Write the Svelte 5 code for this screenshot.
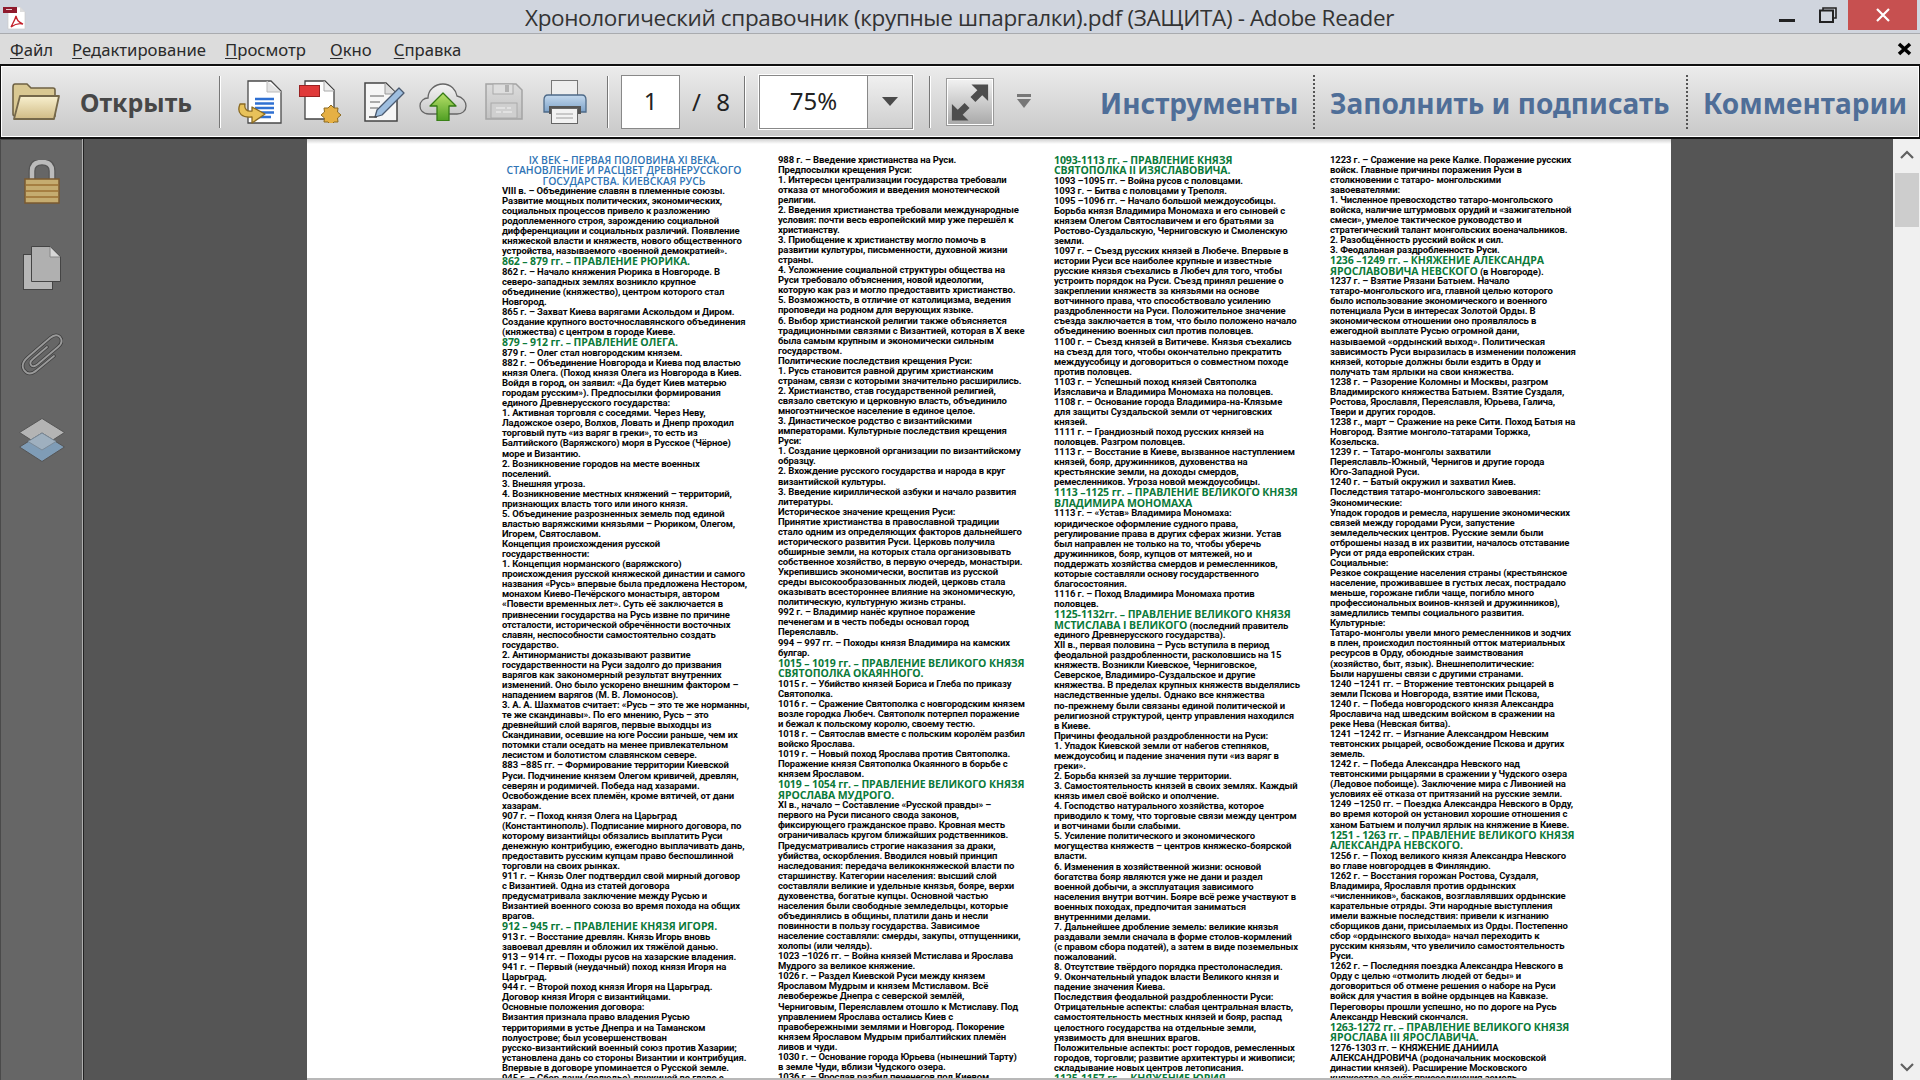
<script>
  const raw = [
`^IX ВЕК – ПЕРВАЯ ПОЛОВИНА XI ВЕКА.
^СТАНОВЛЕНИЕ И РАСЦВЕТ ДРЕВНЕРУССКОГО
^ГОСУДАРСТВА. КИЕВСКАЯ РУСЬ
VIII в. – Объединение славян в племенные союзы.
Развитие мощных политических, экономических,
социальных процессов привело к разложению
родоплеменного строя, зарождению социальной
дифференциации и социальных различий. Появление
княжеской власти и княжеств, нового общественного
устройства, называемого «военной демократией».
#862 – 879 гг. – ПРАВЛЕНИЕ РЮРИКА.
862 г. – Начало княжения Рюрика в Новгороде. В
северо-западных землях возникло крупное
объединение (княжество), центром которого стал
Новгород.
865 г. – Захват Киева варягами Аскольдом и Диром.
Создание крупного восточнославянского объединения
(княжества) с центром в городе Киеве.
#879 – 912 гг. – ПРАВЛЕНИЕ ОЛЕГА.
879 г. – Олег стал новгородским князем.
882 г. – Объединение Новгорода и Киева под властью
князя Олега. (Поход князя Олега из Новгорода в Киев.
Войдя в город, он заявил: «Да будет Киев матерью
городам русским»). Предпосылки формирования
единого Древнерусского государства:
1. Активная торговля с соседями. Через Неву,
Ладожское озеро, Волхов, Ловать и Днепр проходил
торговый путь «из варяг в греки», то есть из
Балтийского (Варяжского) моря в Русское (Чёрное)
море и Византию.
2. Возникновение городов на месте военных
поселений.
3. Внешняя угроза.
4. Возникновение местных княжений – территорий,
признающих власть того или иного князя.
5. Объединение разрозненных земель под единой
властью варяжскими князьями – Рюриком, Олегом,
Игорем, Святославом.
Концепция происхождения русской
государственности:
1. Концепция норманского (варяжского)
происхождения русской княжеской династии и самого
названия «Русь» впервые была предложена Нестором,
монахом Киево-Печёрского монастыря, автором
«Повести временных лет». Суть её заключается в
привнесении государства на Русь извне по причине
отсталости, исторической обречённости восточных
славян, неспособности самостоятельно создать
государство.
2. Антинорманисты доказывают развитие
государственности на Руси задолго до призвания
варягов как закономерный результат внутренних
изменений. Оно было ускорено внешним фактором –
нападением варягов (М. В. Ломоносов).
3. А. А. Шахматов считает: «Русь – это те же норманны,
те же скандинавы». По его мнению, Русь – это
древнейший слой варягов, первые выходцы из
Скандинавии, осевшие на юге России раньше, чем их
потомки стали оседать на менее привлекательном
лесистом и болотистом славянском севере.
883 –885 гг. – Формирование территории Киевской
Руси. Подчинение князем Олегом кривичей, древлян,
северян и родимичей. Победа над хазарами.
Освобождение всех племён, кроме вятичей, от дани
хазарам.
907 г. – Поход князя Олега на Царьград
(Константинополь). Подписание мирного договора, по
которому византийцы обязались выплатить Руси
денежную контрибуцию, ежегодно выплачивать дань,
предоставить русским купцам право беспошлинной
торговли на своих рынках.
911 г. – Князь Олег подтвердил свой мирный договор
с Византией. Одна из статей договора
предусматривала заключение между Русью и
Византией военного союза во время похода на общих
врагов.
#912 – 945 гг. – ПРАВЛЕНИЕ КНЯЗЯ ИГОРЯ.
913 г. – Восстание древлян. Князь Игорь вновь
завоевал древлян и обложил их тяжёлой данью.
913 – 914 гг. – Походы русов на хазарские владения.
941 г. – Первый (неудачный) поход князя Игоря на
Царьград.
944 г. – Второй поход князя Игоря на Царьград.
Договор князя Игоря с византийцами.
Основные положения договора:
Византия признала право владения Русью
территориями в устье Днепра и на Таманском
полуострове; был усовершенствован
русско-византийский военный союз против Хазарии;
установлена дань со стороны Византии и контрибуция.
Впервые в договоре упоминается о Русской земле.
945 г. – Сбор дани (полюдье) дружиной во главе с`,
`988 г. – Введение христианства на Руси.
Предпосылки крещения Руси:
1. Интересы централизации государства требовали
отказа от многобожия и введения монотеической
религии.
2. Введения христианства требовали международные
условия: почти весь европейский мир уже перешёл к
христианству.
3. Приобщение к христианству могло помочь в
развитии культуры, письменности, духовной жизни
страны.
4. Усложнение социальной структуры общества на
Руси требовало объяснения, новой идеологии,
которую как раз и могло предоставить христианство.
5. Возможность, в отличие от католицизма, ведения
проповеди на родном для верующих языке.
6. Выбор христианской религии также объясняется
традиционными связями с Византией, которая в X веке
была самым крупным и экономически сильным
государством.
Политические последствия крещения Руси:
1. Русь становится равной другим христианским
странам, связи с которыми значительно расширились.
2. Христианство, став государственной религией,
связало светскую и церковную власть, объединило
многоэтническое население в единое целое.
3. Династическое родство с византийскими
императорами. Культурные последствия крещения
Руси:
1. Создание церковной организации по византийскому
образцу.
2. Вхождение русского государства и народа в круг
византийской культуры.
3. Введение кириллической азбуки и начало развития
литературы.
Историческое значение крещения Руси:
Принятие христианства в православной традиции
стало одним из определяющих факторов дальнейшего
исторического развития Руси. Церковь получила
обширные земли, на которых стала организовывать
собственное хозяйство, в первую очередь, монастыри.
Укрепившись экономически, воспитав из русской
среды высокообразованных людей, церковь стала
оказывать всестороннее влияние на экономическую,
политическую, культурную жизнь страны.
992 г. – Владимир нанёс крупное поражение
печенегам и в честь победы основал город
Переяславль.
994 – 997 гг. – Походы князя Владимира на камских
булгар.
#1015 – 1019 гг. – ПРАВЛЕНИЕ ВЕЛИКОГО КНЯЗЯ
#СВЯТОПОЛКА ОКАЯННОГО.
1015 г. – Убийство князей Бориса и Глеба по приказу
Святополка.
1016 г. – Сражение Святополка с новгородским князем
возле городка Любеч. Святополк потерпел поражение
и бежал к польскому королю, своему тестю.
1018 г. – Святослав вместе с польским королём разбил
войско Ярослава.
1019 г. – Новый поход Ярослава против Святополка.
Поражение князя Святополка Окаянного в борьбе с
князем Ярославом.
#1019 – 1054 гг. – ПРАВЛЕНИЕ ВЕЛИКОГО КНЯЗЯ
#ЯРОСЛАВА МУДРОГО.
XI в., начало – Составление «Русской правды» –
первого на Руси писаного свода законов,
фиксирующего гражданское право. Кровная месть
ограничивалась кругом ближайших родственников.
Предусматривались строгие наказания за драки,
убийства, оскорбления. Вводился новый принцип
наследования: передача великокняжеской власти по
старшинству. Категории населения: высший слой
составляли великие и удельные князья, бояре, верхи
духовенства, богатые купцы. Основной частью
населения были свободные земледельцы, которые
объединялись в общины, платили дань и несли
повинности в пользу государства. Зависимое
население составляли: смерды, закупы, отпущенники,
холопы (или челядь).
1023 –1026 гг. – Война князей Мстислава и Ярослава
Мудрого за великое княжение.
1026 г. – Раздел Киевской Руси между князем
Ярославом Мудрым и князем Мстиславом. Всё
левобережье Днепра с северской землёй,
Черниговым, Переяславлем отошло к Мстиславу. Под
управлением Ярослава остались Киев с
правобережными землями и Новгород. Покорение
князем Ярославом Мудрым прибалтийских племён
ливов и чуди.
1030 г. – Основание города Юрьева (нынешний Тарту)
в земле Чуди, вблизи Чудского озера.
1036 г. – Ярослав разбил печенегов под Киевом.`,
`#1093-1113 гг. – ПРАВЛЕНИЕ КНЯЗЯ
#СВЯТОПОЛКА II ИЗЯСЛАВОВИЧА.
1093 –1095 гг. – Война русов с половцами.
1093 г. – Битва с половцами у Треполя.
1095 –1096 гг. – Начало большой междоусобицы.
Борьба князя Владимира Мономаха и его сыновей с
князем Олегом Святославичем и его братьями за
Ростово-Суздальскую, Черниговскую и Смоленскую
земли.
1097 г. – Съезд русских князей в Любече. Впервые в
истории Руси все наиболее крупные и известные
русские князья съехались в Любеч для того, чтобы
устроить порядок на Руси. Съезд принял решение о
закреплении княжеств за князьями на основе
вотчинного права, что способствовало усилению
раздробленности на Руси. Положительное значение
съезда заключается в том, что было положено начало
объединению военных сил против половцев.
1100 г. – Съезд князей в Витичеве. Князья съехались
на съезд для того, чтобы окончательно прекратить
междуусобицу и договориться о совместном походе
против половцев.
1103 г. – Успешный поход князей Святополка
Изяславича и Владимира Мономаха на половцев.
1108 г. – Основание города Владимира-на-Клязьме
для защиты Суздальской земли от черниговских
князей.
1111 г. – Грандиозный поход русских князей на
половцев. Разгром половцев.
1113 г. – Восстание в Киеве, вызванное наступлением
князей, бояр, дружинников, духовенства на
крестьянские земли, на доходы смердов,
ремесленников. Угроза новой междоусобицы.
#1113 –1125 гг. – ПРАВЛЕНИЕ ВЕЛИКОГО КНЯЗЯ
#ВЛАДИМИРА МОНОМАХА
1113 г. – «Устав» Владимира Мономаха:
юридическое оформление судного права,
регулирование права в других сферах жизни. Устав
был направлен не только на то, чтобы уберечь
дружинников, бояр, купцов от мятежей, но и
поддержать хозяйства смердов и ремесленников,
которые составляли основу государственного
благосостояния.
1116 г. – Поход Владимира Мономаха против
половцев.
#1125-1132гг. – ПРАВЛЕНИЕ ВЕЛИКОГО КНЯЗЯ
#МСТИСЛАВА I ВЕЛИКОГО|(последний правитель
единого Древнерусского государства).
XII в., первая половина – Русь вступила в период
феодальной раздробленности, расколовшись на 15
княжеств. Возникли Киевское, Черниговское,
Северское, Владимиро-Суздальское и другие
княжества. В пределах крупных княжеств выделялись
наследственные уделы. Однако все княжества
по-прежнему были связаны единой политической и
религиозной структурой, центр управления находился
в Киеве.
Причины феодальной раздробленности на Руси:
1. Упадок Киевской земли от набегов степняков,
междоусобиц и падение значения пути «из варяг в
греки».
2. Борьба князей за лучшие территории.
3. Самостоятельность князей в своих землях. Каждый
князь имел своё войско и ополчение.
4. Господство натурального хозяйства, которое
приводило к тому, что торговые связи между центром
и вотчинами были слабыми.
5. Усиление политического и экономического
могущества княжеств – центров княжеско-боярской
власти.
6. Изменения в хозяйственной жизни: основой
богатства бояр являются уже не дани и раздел
военной добычи, а эксплуатация зависимого
населения внутри вотчин. Бояре всё реже участвуют в
военных походах, предпочитая заниматься
внутренними делами.
7. Дальнейшее дробление земель: великие князья
раздавали земли сначала в форме столов-кормлений
(с правом сбора податей), а затем в виде поземельных
пожалований.
8. Отсутствие твёрдого порядка престолонаследия.
9. Окончательный упадок власти Великого князя и
падение значения Киева.
Последствия феодальной раздробленности Руси:
Отрицательные аспекты: слабая центральная власть,
самостоятельность местных князей и бояр, распад
целостного государства на отдельные земли,
уязвимость для внешних врагов.
Положительные аспекты: рост городов, ремесленных
городов, торговли; развитие архитектуры и живописи;
складывание новых центров летописания.
#1125-1157 гг. – КНЯЖЕНИЕ ЮРИЯ`,
`1223 г. – Сражение на реке Калке. Поражение русских
войск. Главные причины поражения Руси в
столкновении с татаро- монгольскими
завоевателями:
1. Численное превосходство татаро-монгольского
войска, наличие штурмовых орудий и «зажигательной
смеси», умелое тактическое руководство и
стратегический талант монгольских военачальников.
2. Разобщённость русский войск и сил.
3. Феодальная раздробленность Руси.
#1236 –1249 гг. – КНЯЖЕНИЕ АЛЕКСАНДРА
#ЯРОСЛАВОВИЧА НЕВСКОГО|(в Новгороде).
1237 г. – Взятие Рязани Батыем. Начало
татаро-монгольского ига, главной целью которого
было использование экономического и военного
потенциала Руси в интересах Золотой Орды. В
экономическом отношении оно проявлялось в
ежегодной выплате Русью огромной дани,
называемой «ордынский выход». Политическая
зависимость Руси выразилась в изменении положения
князей, которые должны были ездить в Орду и
получать там ярлыки на свои княжества.
1238 г. – Разорение Коломны и Москвы, разгром
Владимирского княжества Батыем. Взятие Суздаля,
Ростова, Ярославля, Переяславля, Юрьева, Галича,
Твери и других городов.
1238 г., март – Сражение на реке Сити. Поход Батыя на
Новгород. Взятие монголо-татарами Торжка,
Козельска.
1239 г. – Татаро-монголы захватили
Переяславль-Южный, Чернигов и другие города
Юго-Западной Руси.
1240 г. – Батый окружил и захватил Киев.
Последствия татаро-монгольского завоевания:
Экономические:
Упадок городов и ремесла, нарушение экономических
связей между городами Руси, запустение
земледельческих центров. Русские земли были
отброшены назад в их развитии, началось отставание
Руси от ряда европейских стран.
Социальные:
Резкое сокращение населения страны (крестьянское
население, проживавшее в густых лесах, пострадало
меньше, горожане гибли чаще, погибло много
профессиональных воинов-князей и дружинников),
замедлились темпы социального развития.
Культурные:
Татаро-монголы увели много ремесленников и зодчих
в плен, происходил постоянный отток материальных
ресурсов в Орду, обоюдные заимствования
(хозяйство, быт, язык). Внешнеполитические:
Были нарушены связи с другими странами.
1240 –1241 гг. – Вторжение тевтонских рыцарей в
земли Пскова и Новгорода, взятие ими Пскова,
1240 г. – Победа новгородского князя Александра
Ярославича над шведским войском в сражении на
реке Нева (Невская битва).
1241 –1242 гг. – Изгнание Александром Невским
тевтонских рыцарей, освобождение Пскова и других
земель.
1242 г. – Победа Александра Невского над
тевтонскими рыцарями в сражении у Чудского озера
(Ледовое побоище). Заключение мира с Ливонией на
условиях её отказа от притязаний на русские земли.
1249 –1250 гг. – Поездка Александра Невского в Орду,
во время которой он установил хорошие отношения с
ханом Батыем и получил ярлык на княжение в Киеве.
#1251 - 1263 гг. – ПРАВЛЕНИЕ ВЕЛИКОГО КНЯЗЯ
#АЛЕКСАНДРА НЕВСКОГО.
1256 г. – Поход великого князя Александра Невского
во главе новгородцев в Финляндию.
1262 г. – Восстания горожан Ростова, Суздаля,
Владимира, Ярославля против ордынских
«численников», баскаков, возглавлявших ордынские
карательные отряды. Эти народные выступления
имели важные последствия: привели к изгнанию
сборщиков дани, присылаемых из Орды. Постепенно
сбор «ордынского выхода» начал переходить к
русским князьям, что увеличило самостоятельность
Руси.
1262 г. – Последняя поездка Александра Невского в
Орду с целью «отмолить людей от беды» и
договориться об отмене решения о наборе на Руси
войск для участия в войне ордынцев на Кавказе.
Переговоры прошли успешно, но по дороге на Русь
Александр Невский скончался.
#1263-1272 гг. – ПРАВЛЕНИЕ ВЕЛИКОГО КНЯЗЯ
#ЯРОСЛАВА III ЯРОСЛАВИЧА.
1276-1303 гг. – КНЯЖЕНИЕ ДАНИИЛА
АЛЕКСАНДРОВИЧА (родоначальник московской
династии князей). Расширение Московского
княжества за счёт присоединения земель`
  ];

  const columns = raw.map((c) =>
    c.split('\n').map((s) => {
      if (s[0] === '^') return { cls: 'line title', text: s.slice(1), rest: '' };
      if (s[0] === '#') {
        const [text, rest = ''] = s.slice(1).split('|');
        return { cls: 'line head', text, rest };
      }
      return { cls: 'line', text: s, rest: '' };
    })
  );
  const menus = [['Ф', 'айл'], ['Р', 'едактирование'], ['П', 'росмотр'], ['О', 'кно'], ['С', 'правка']];
</script>

<div class="window">
  <header class="titlebar">
    <svg class="appicon" width="24" height="24" viewBox="0 0 24 24">
      <path d="M6 1H18L23 6V23H6Z" fill="#fff" stroke="#ccc" stroke-width=".7" />
      <path d="M18 1V6H23" fill="#ddd" />
      <rect x="1" y="1" width="14" height="6" fill="#8f1a2d" />
      <path d="M4 3.5h6" stroke="#e8c8cc" stroke-width="1" />
      <path d="M14 10c1 4 2 6 7 8c-4-1-8 0-12 3c2-4 4-7 5-11Z" fill="none" stroke="#c4202a" stroke-width="1.3" />
    </svg>
    <div class="titletext">Хронологический справочник (крупные шпаргалки).pdf (ЗАЩИТА) - Adobe Reader</div>
    <div class="winbtns">
      <svg class="w-min" width="16" height="3"><rect width="16" height="3" fill="#222" /></svg>
      <svg class="w-max" width="18" height="16" viewBox="0 0 18 16">
        <path d="M4 3V1H17V11H14" fill="none" stroke="#222" stroke-width="1.6" />
        <rect x="1" y="3.5" width="13" height="11.5" fill="none" stroke="#222" stroke-width="2" />
      </svg>
      <div class="w-close">
        <svg width="14" height="14" viewBox="0 0 14 14"><path d="M1 1L13 13M13 1L1 13" stroke="#fff" stroke-width="2.2" /></svg>
      </div>
    </div>
  </header>

  <nav class="menubar">
    {#each menus as m}
      <span class="menu"><u>{m[0]}</u>{m[1]}</span>
    {/each}
    <svg class="docclose" width="15" height="14" viewBox="0 0 15 14">
      <path d="M2 2L13 12M13 2L2 12" stroke="#000" stroke-width="3.6" />
    </svg>
  </nav>

  <div class="toolbar">
    <svg class="t-folder" width="48" height="38" viewBox="0 0 48 38">
      <defs>
        <linearGradient id="fld" x1="0" y1="0" x2="0" y2="1"><stop offset="0" stop-color="#f8f0cf" /><stop offset="1" stop-color="#d0bb85" /></linearGradient>
      </defs>
      <path d="M1 4Q1 1 3 1H15L19 5H41Q43 5 43 7V33H3Q1 33 1 31Z" fill="#d9c892" stroke="#6f6244" stroke-width="1.6" />
      <path d="M8 13H47L42 36H2Z" fill="url(#fld)" stroke="#75684a" stroke-width="1.8" stroke-linejoin="round" />
    </svg>
    <span class="open">Открыть</span>
    <i class="sep s1"></i>

    <svg class="t-a" width="45" height="44" viewBox="0 0 45 44">
      <path d="M11 1H34L44 11V43H11Z" fill="#fff" stroke="#4a4a4a" stroke-width="1.3" />
      <path d="M30 1V12H44" fill="#e4e4e4" stroke="#bbb" />
      <path d="M18 19H37M18 23.5H37M18 28H37M18 32.5H37M18 37H34" stroke="#2f70d2" stroke-width="2.4" />
      <path d="M3 24C-1 34 6 38 15 37V43L28 34L15 27V31C10 32 7 29 8 24Z" fill="#e8c25a" stroke="#8a6a22" stroke-width="1.3" stroke-linejoin="round" />
    </svg>
    <svg class="t-b" width="43" height="43" viewBox="0 0 43 43">
      <path d="M6 1H26L35 10V39H6Z" fill="#fff" stroke="#444" stroke-width="1.3" />
      <path d="M25 1V11H35" fill="#eee" stroke="#aaa" />
      <rect x="0.5" y="5.5" width="20" height="11" fill="#e03a3a" stroke="#992222" />
      <path d="M32 25l3 3h4l-.5 4 3.5 3-3.5 3 .5 4h-4l-3 3-3-3h-4l.5-4-3.5-3 3.5-3-.5-4h4Z" fill="#e6b044" stroke="#8c6a20" />
    </svg>
    <svg class="t-c" width="42" height="40" viewBox="0 0 42 40">
      <path d="M1 1H22L33 12V39H1Z" fill="#f6f6f6" stroke="#444" stroke-width="1.5" />
      <path d="M21 1V12H33" fill="#ddd" stroke="#999" />
      <path d="M6 14H20M6 20H16M6 26H14" stroke="#aaa" stroke-width="1.8" />
      <path d="M35 6L40 11L18 33L11 35L13 28Z" fill="#9fbfe0" stroke="#4a5a70" stroke-width="1.3" stroke-linejoin="round" />
      <path d="M5 35L13 35" stroke="#444" stroke-width="1.5" />
    </svg>
    <svg class="t-d" width="48" height="38" viewBox="0 0 48 38">
      <defs>
        <linearGradient id="cld" x1="0" y1="0" x2="0" y2="1"><stop offset="0" stop-color="#f4f4f4" /><stop offset="1" stop-color="#c8c8c8" /></linearGradient>
        <linearGradient id="arw" x1="0" y1="0" x2="0" y2="1"><stop offset="0" stop-color="#b8e06a" /><stop offset="1" stop-color="#4e9e22" /></linearGradient>
      </defs>
      <path d="M10 31C3 31 1 26 1 23C1 18 5 15 9 15C9 7 16 1 24 1C32 1 37 7 38 13C44 14 47 19 47 23C47 28 43 31 38 31Z" fill="url(#cld)" stroke="#666" stroke-width="1.3" />
      <path d="M24 10L37 23H30V38H18V23H11Z" fill="url(#arw)" stroke="#357a15" stroke-width="1.3" stroke-linejoin="round" />
    </svg>
    <svg class="t-e" width="38" height="37" viewBox="0 0 38 37">
      <defs>
        <linearGradient id="dsk" x1="0" y1="0" x2="0" y2="1"><stop offset="0" stop-color="#dcdcdc" /><stop offset="1" stop-color="#c2c2c2" /></linearGradient>
      </defs>
      <path d="M1 1H31L37 7V36H1Z" fill="url(#dsk)" stroke="#a4a4a4" stroke-width="1.5" />
      <rect x="8" y="1" width="20" height="10" fill="#dedede" stroke="#aaa" />
      <rect x="20" y="2" width="4" height="7" fill="#b2b2b2" />
      <rect x="6" y="20" width="26" height="15" fill="#cfcfcf" stroke="#aaa" />
      <path d="M11 25H20M22 25H26M11 29H16M18 29H27" stroke="#e8e8e8" stroke-width="1.5" />
    </svg>
    <svg class="t-f" width="44" height="44" viewBox="0 0 44 44">
      <defs>
        <linearGradient id="prn" x1="0" y1="0" x2="0" y2="1"><stop offset="0" stop-color="#c4d9ee" /><stop offset="1" stop-color="#7da2c8" /></linearGradient>
      </defs>
      <rect x="8.5" y=".5" width="26" height="18" fill="#eee" stroke="#777" />
      <path d="M5 15H39Q43 15 43 20V32H1V20Q1 15 5 15Z" fill="url(#prn)" stroke="#4e6a88" stroke-width="1.3" />
      <rect x="6" y="26" width="32" height="8" fill="#555" />
      <rect x="8.5" y="28.5" width="26" height="15" fill="#f2f2f2" stroke="#666" />
      <path d="M13 34H30M13 38H30" stroke="#bbb" stroke-width="1.3" />
    </svg>
    <i class="sep s2"></i>

    <div class="pagebox">1</div>
    <span class="pages"><span>/</span><span>8</span></span>
    <i class="sep s3"></i>

    <div class="zoombox">
      <span class="zoomval">75%</span>
      <span class="zoomdrop"><svg width="16" height="9" viewBox="0 0 16 9"><path d="M0 0H16L8 9Z" fill="#4a4a4a" /></svg></span>
    </div>
    <i class="sep s4"></i>

    <div class="fit">
      <svg width="47" height="47" viewBox="0 0 47 47">
        <path d="M42 5V22L36 16L29 23L24 18L31 11L25 5Z" fill="#4d4d4d" />
        <path d="M5 42V25L11 31L18 24L23 29L16 36L22 42Z" fill="#4d4d4d" />
      </svg>
    </div>
    <svg class="grab" width="16" height="15" viewBox="0 0 16 15">
      <rect x="1" y="0" width="14" height="3" fill="#777" />
      <path d="M1 5H15L8 14Z" fill="#777" />
    </svg>

    <span class="tab t1">Инструменты</span>
    <i class="dots d1"></i>
    <span class="tab t2">Заполнить и подписать</span>
    <i class="dots d2"></i>
    <span class="tab t3">Комментарии</span>
  </div>

  <main class="main">
    <aside class="rail">
      <svg class="r-lock" width="36" height="44" viewBox="0 0 36 44">
        <path d="M8 20V11Q8 2 18 2Q28 2 28 11V20" fill="none" stroke="#555" stroke-width="7" />
        <path d="M8 20V11Q8 2 18 2Q28 2 28 11V20" fill="none" stroke="#bbb" stroke-width="4.5" />
        <rect x="1" y="19" width="34" height="24" fill="#c5ac70" stroke="#7a5a30" stroke-width="1.5" />
        <path d="M2 25H34M2 31H34M2 37H34" stroke="#a67f42" stroke-width="2" />
      </svg>
      <svg class="r-pages" width="38" height="44" viewBox="0 0 38 44">
        <rect x=".5" y="8.5" width="29" height="35" fill="#b6b6b6" stroke="#444" />
        <path d="M8.5 .5H27L37.5 11V35.5H8.5Z" fill="#b0b0b0" stroke="#444" />
        <path d="M27 1V11H37" fill="#d8d8d8" stroke="#888" />
      </svg>
      <svg class="r-clip" width="42" height="44" viewBox="0 0 42 44">
        <path d="M33 24L16 38Q8 45 3 38Q-1 32 7 25L29 6Q35 1 39 5Q43 10 37 15L17 32Q12 36 10 33Q8 30 12 27L26 15" fill="none" stroke="#3f3f3f" stroke-width="3.4" stroke-linecap="round" />
        <path d="M33 24L16 38Q8 45 3 38Q-1 32 7 25L29 6Q35 1 39 5Q43 10 37 15L17 32Q12 36 10 33Q8 30 12 27L26 15" fill="none" stroke="#9a9a9a" stroke-width="1.8" stroke-linecap="round" />
      </svg>
      <svg class="r-layers" width="46" height="44" viewBox="0 0 46 44">
        <path d="M23 .5L45.5 14.5L23 29L.5 14.5Z" fill="#b4b4b4" stroke="#555" />
        <path d="M23 15L45.5 29L23 43.5L.5 29Z" fill="#7f9cb6" stroke="#555" />
        <path d="M23 15L37 23.5L23 32L9 23.5Z" fill="#9fb0bf" stroke="#7b8a98" />
      </svg>
    </aside>
    <div class="gutter left"></div>
    <section class="page">
      {#each columns as col}
        <div class="col">
          {#each col as l}
            <div class={l.cls}>{l.text}{#if l.rest}<span class="rest">{' ' + l.rest}</span>{/if}</div>
          {/each}
        </div>
      {/each}
    </section>
    <div class="gutter right"></div>
    <div class="scrollbar">
      <svg width="14" height="9" viewBox="0 0 14 9"><path d="M1 8L7 2L13 8" fill="none" stroke="#606060" stroke-width="2.2" /></svg>
      <div class="thumb"></div>
      <div class="spacer"></div>
      <svg width="14" height="9" viewBox="0 0 14 9"><path d="M1 1L7 7L13 1" fill="none" stroke="#606060" stroke-width="2.2" /></svg>
    </div>
  </main>
</div>

<style>
  :global(body) { margin: 0; background: #555; overflow: hidden; }
  .window {
    width: 1920px; height: 1080px; display: flex; flex-direction: column; overflow: hidden;
    font-family: "Open Sans", "Noto Sans", sans-serif; color: #333;
  }
  .titlebar {
    height: 34px; box-sizing: border-box; flex: none; display: flex; align-items: flex-start;
    background: #d0d5de; border-bottom: 1px solid #a9abaf;
  }
  .appicon { margin: 6px 0 0 2px; flex: none; }
  .titletext {
    width: 869px; margin-left: 499px; flex: none; white-space: nowrap;
    font-size: 22.5px; letter-spacing: -0.36px; line-height: 36px; color: #333;
  }
  .winbtns { margin-left: auto; display: flex; align-items: flex-start; margin-right: 3px; }
  .w-min { margin-top: 19px; }
  .w-max { margin: 7px 0 0 24px; }
  .w-close {
    width: 69px; height: 30px; margin-left: 11px; background: #c75050;
    display: flex; align-items: center; justify-content: center;
  }
  .menubar {
    height: 30px; flex: none; box-sizing: border-box; background: #dcdcdc; display: flex; align-items: center;
    padding-left: 10px; font-family: "Noto Sans", sans-serif; font-size: 16.7px; color: #2a2a2a;
    gap: 19px; position: relative;
  }
  .menu u { text-underline-offset: 2px; }
  .menu:nth-child(4) { margin-left: 5px; }
  .menu:nth-child(5) { margin-left: 3px; }
  .docclose { margin-left: auto; margin-right: 8px; }
  .toolbar {
    height: 75px; flex: none; box-sizing: border-box; display: flex; align-items: center;
    border: 2px solid #111; border-left-width: 1px; border-right-width: 1px;
    box-shadow: inset 0 0 0 1px #fff;
    background: linear-gradient(#ececec, #c8c8c8);
    font-family: "Noto Sans", sans-serif;
  }
  .toolbar > * { flex: none; }
  .t-folder { margin-left: 11px; }
  .open { margin-left: 20px; width: 110px; font-size: 25px; font-weight: 700; color: #474747; white-space: nowrap; }
  .sep { width: 1px; height: 52px; background: #777; border-right: 1px solid #fff; }
  .s1 { margin-left: 29px; }
  .t-a { margin-left: 16px; }
  .t-b { margin-left: 17px; }
  .t-c { margin-left: 22px; }
  .t-d { margin-left: 13px; }
  .t-e { margin-left: 18px; }
  .t-f { margin-left: 20px; }
  .s2 { margin-left: 20px; }
  .pagebox {
    margin-left: 12px; width: 59px; height: 54px; box-sizing: border-box; background: #fff;
    border: 1px solid #888; text-align: center; font-size: 24px; line-height: 50px; color: #222;
  }
  .pages { margin-left: 12px; width: 38px; display: flex; justify-content: space-between; font-size: 24px; color: #222; }
  .s3 { margin-left: 14px; }
  .zoombox {
    margin-left: 13px; width: 154px; height: 54px; box-sizing: border-box; display: flex;
    background: #fff; border: 1px solid #888; outline: 1px solid #fff;
  }
  .zoomval { width: 107px; text-align: center; font-size: 24px; line-height: 50px; color: #222; }
  .zoomdrop {
    flex: 1; display: flex; align-items: center; justify-content: center;
    background: linear-gradient(#f0f0f0, #cfcfcf); border-left: 1px solid #888;
  }
  .s4 { margin-left: 16px; }
  .fit {
    margin-left: 15px; width: 48px; height: 48px; box-sizing: border-box; display: flex;
    border: 1px solid #999; box-shadow: inset 0 0 0 1px #fff;
    background: linear-gradient(#f2f2f2, #a8a8a8);
  }
  .grab { margin-left: 22px; }
  .tab { font-size: 28px; font-weight: 700; color: #4f6e98; white-space: nowrap; margin-top: 2px; }
  .t1 { margin-left: 68px; width: 198px; }
  .t2 { margin-left: 15px; width: 341px; }
  .t3 { margin-left: 15px; width: 202px; }
  .dots { height: 54px; width: 0; border-left: 2px dotted #555; }
  .d1 { margin-left: 15px; }
  .d2 { margin-left: 15px; }
  .main { flex: 1; min-height: 0; display: flex; background: #555; }
  .rail {
    width: 84px; flex: none; box-sizing: border-box; background: #666; display: flex; flex-direction: column;
    align-items: center; padding: 21px 0 0 0; border-left: 1px solid #4a4a4a;
    border-right: 1px solid #222; box-shadow: inset -1px 0 0 #b0b0b0, inset 0 1px 0 #444;
  }
  .r-pages { margin-top: 42px; }
  .r-clip { margin-top: 42px; }
  .r-layers { margin-top: 42px; }
  .gutter { background: #555; flex: none; }
  .left { width: 223px; }
  .right { width: 222px; }
  .page {
    width: 1364px; flex: none; box-sizing: border-box; background: #fff; display: flex; overflow: hidden;
    padding: 15.5px 0 0 195px; position: relative;
  }
  .page::before {
    content: ""; position: absolute; left: 0; right: 0; top: 0; height: 5px;
    background: linear-gradient(#d0d0d0, #fff);
  }
  .page::after {
    content: ""; position: absolute; left: 0; right: 0; bottom: 0; height: 2px; background: #b8b8b8;
  }
  .col { width: 276px; flex: none; }
  .line {
    font-family: Roboto, sans-serif; font-weight: 700; font-size: 9.5px; letter-spacing: -0.12px; line-height: 10.07px;
    height: 10.07px; color: #050505; white-space: nowrap;
  }
  .head { font-family: "Open Sans", sans-serif; font-size: 10.5px; letter-spacing: -0.1px; height: 10.5px; line-height: 10.5px; color: #0b7a3a; font-weight: 700; }
  .title { font-family: "Open Sans", sans-serif; font-size: 10.4px; letter-spacing: 0; height: 10.5px; line-height: 10.5px; color: #2f74b5; width: 244px; text-align: center; font-weight: 600; }
  .rest { font-family: Roboto, sans-serif; font-weight: 700; font-size: 9.5px; letter-spacing: -0.12px; color: #050505; }
  .scrollbar {
    width: 27px; flex: none; background: #f0f0f0; display: flex; flex-direction: column; align-items: center;
    padding: 11px 0 8px; box-sizing: border-box;
  }
  .thumb { width: 24px; height: 54px; margin-top: 14px; background: #cdcdcd; }
  .spacer { flex: 1; }
</style>
